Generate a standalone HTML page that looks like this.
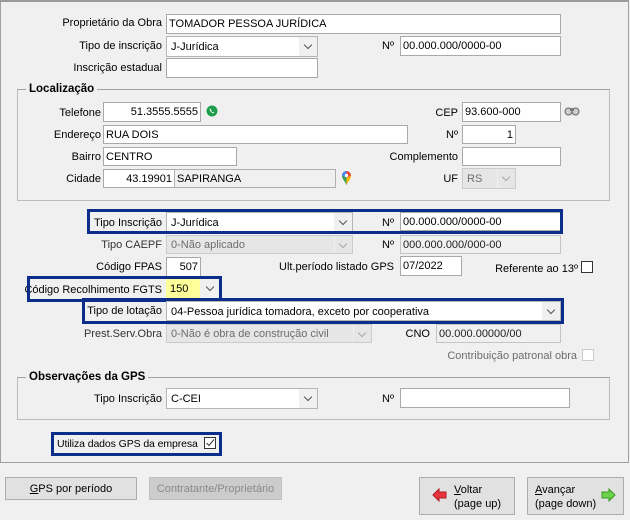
<!DOCTYPE html>
<html><head><meta charset="utf-8"><style>
*{box-sizing:border-box;margin:0;padding:0}
body{width:630px;height:520px;background:#f0f0f0;font-family:"Liberation Sans",sans-serif;font-size:11px;color:#000;position:relative;overflow:hidden}
.a{position:absolute}
.l{position:absolute;text-align:right;white-space:nowrap;line-height:14px}
.in{position:absolute;background:#fff;border:1px solid #a9a9a9;padding:2px 2px;line-height:14px;white-space:nowrap;overflow:hidden}
.dis{background:#f0f0f0;color:#6d6d6d;border-color:#cfcfcf}
.cb{position:absolute;background:#fff;border:1px solid #a9a9a9;overflow:hidden}
.cb span{position:absolute;left:4px;top:3px;line-height:14px;white-space:nowrap}
.cb i{position:absolute;right:0;top:0;bottom:0;width:18px;background:#f0f0f0;border-left:1px solid #f0f0f0}
.cb i:after{content:"";position:absolute;left:5px;top:5px;width:5px;height:5px;border-right:1px solid #555;border-bottom:1px solid #555;transform:rotate(45deg)}
.cb.d{background:#e6e6e6;border-color:#cccccc;color:#6d6d6d}
.cb.d i{background:#e6e6e6}
.cb.d i:after{border-color:#aaa}
.grp{position:absolute;border:1px solid #bcbcbc;border-top-color:#a0a0a0}
.gl{position:absolute;background:#f0f0f0;font-weight:bold;padding:0 3px;line-height:14px;font-size:11.5px}
.hl{position:absolute;border:3px solid #0c2e8a}
.chk{position:absolute;background:#fff;border:1px solid #333;width:12px;height:12px}
.btn{position:absolute;background:#e1e1e1;border:1px solid #adadad;text-align:center;line-height:14px}
</style></head><body>
<div class="a" style="left:0;top:0;width:629px;height:463px;border:1px solid #a0a0a0;border-top:2px solid #9a9a9a"></div>

<div class="l" style="right:468px;top:16px">Proprietário da Obra</div>
<div class="in" style="left:166px;top:14px;width:395px;height:20px">TOMADOR PESSOA JURÍDICA</div>
<div class="l" style="right:468px;top:39px">Tipo de inscrição</div>
<div class="cb" style="left:166px;top:36px;width:152px;height:21px;border-color:#b5b5b5;background:#fff"><span>J-Jurídica</span><i></i></div>
<div class="l" style="right:236px;top:39px">Nº</div>
<div class="in" style="left:400px;top:36px;width:161px;height:20px">00.000.000/0000-00</div>
<div class="l" style="right:468px;top:61px">Inscrição estadual</div>
<div class="in" style="left:166px;top:58px;width:152px;height:20px"></div>

<div class="grp" style="left:17px;top:89px;width:593px;height:112px"></div>
<div class="gl" style="left:26px;top:82px">Localização</div>
<div class="l" style="right:529px;top:106px">Telefone</div>
<div class="in" style="left:103px;top:102px;width:98px;height:20px;text-align:right">51.3555.5555</div>
<svg class="a" style="left:206px;top:105px" width="12" height="12" viewBox="0 0 12 12"><circle cx="6" cy="6" r="5.5" fill="#1e9e4a"/><path d="M4 3.5c-.5.5-.5 1.5.3 2.6s1.8 1.9 2.7 2.1c.6.1 1-.2 1.2-.6l-.9-.7-.6.4c-.6-.3-1.3-1-1.6-1.6l.4-.6-.7-.9z" fill="#fff"/></svg>
<div class="l" style="right:172px;top:106px">CEP</div>
<div class="in" style="left:462px;top:102px;width:99px;height:20px">93.600-000</div>
<svg class="a" style="left:564px;top:106px" width="16" height="10" viewBox="0 0 16 10"><circle cx="4.5" cy="5.5" r="3.5" fill="#ccc" stroke="#666"/><circle cx="11.5" cy="5.5" r="3.5" fill="#ccc" stroke="#666"/><rect x="6" y="2" width="4" height="3" fill="#777"/></svg>
<div class="l" style="right:529px;top:128px">Endereço</div>
<div class="in" style="left:103px;top:125px;width:305px;height:19px">RUA DOIS</div>
<div class="l" style="right:172px;top:128px">Nº</div>
<div class="in" style="left:462px;top:125px;width:54px;height:19px;text-align:right">1</div>
<div class="l" style="right:529px;top:150px">Bairro</div>
<div class="in" style="left:103px;top:147px;width:134px;height:19px">CENTRO</div>
<div class="l" style="right:172px;top:150px">Complemento</div>
<div class="in" style="left:462px;top:147px;width:99px;height:19px"></div>
<div class="l" style="right:529px;top:172px">Cidade</div>
<div class="in" style="left:103px;top:169px;width:72px;height:19px;text-align:right">43.19901</div>
<div class="in" style="left:174px;top:169px;width:162px;height:19px;background:#f0f0f0;border-color:#b0b0b0">SAPIRANGA</div>
<svg class="a" style="left:341px;top:170px" width="11" height="16" viewBox="0 0 11 16"><path d="M5.5 15C4 11 1 9 1 5.5a4.5 4.5 0 0 1 9 0C10 9 7 11 5.5 15z" fill="#ea4335"/><path d="M1 5.5a4.5 4.5 0 0 1 4.5-4.5V8z" fill="#4285f4"/><path d="M5.5 15C4 11 1 9 1 5.5L5.5 8z" fill="#34a853"/><path d="M10 5.5C10 9 7 11 5.5 15V8z" fill="#fbbc04"/><circle cx="5.5" cy="5.5" r="1.7" fill="#fff"/></svg>
<div class="l" style="right:172px;top:172px">UF</div>
<div class="cb d" style="left:462px;top:168px;width:54px;height:21px"><span>RS</span><i></i></div>

<div class="l" style="right:468px;top:216px">Tipo Inscrição</div>
<div class="cb" style="left:166px;top:212px;width:187px;height:20px;border-color:#b5b5b5"><span>J-Jurídica</span><i></i></div>
<div class="l" style="right:236px;top:216px">Nº</div>
<div class="in" style="left:400px;top:212px;width:161px;height:19px">00.000.000/0000-00</div>
<div class="hl" style="left:87px;top:209px;width:476px;height:25px"></div>

<div class="l" style="right:468px;top:238px;color:#333">Tipo CAEPF</div>
<div class="cb d" style="left:166px;top:235px;width:187px;height:19px"><span style="top:2px">0-Não aplicado</span><i></i></div>
<div class="l" style="right:236px;top:238px">Nº</div>
<div class="in dis" style="left:400px;top:235px;width:161px;height:19px;color:#222;border-color:#c4c4c4">000.000.000/000-00</div>

<div class="l" style="right:468px;top:260px">Código FPAS</div>
<div class="in" style="left:166px;top:257px;width:35px;height:20px;text-align:right">507</div>
<div class="l" style="right:236px;top:260px">Ult.período listado GPS</div>
<div class="in" style="left:400px;top:256px;width:62px;height:20px">07/2022</div>
<div class="l" style="right:52px;top:262px">Referente ao 13º</div>
<div class="chk" style="left:581px;top:261px"></div>

<div class="cb" style="left:166px;top:279px;width:53px;height:20px;border:none;background:#f0f0f0"><span style="left:0;top:0;width:34px;height:20px;background:#ffff9a;padding:3px 4px">150</span><i></i></div>
<div class="l" style="right:468px;top:283px">Código Recolhimento FGTS</div>
<div class="hl" style="left:27px;top:276px;width:195px;height:26px"></div>

<div class="cb" style="left:166px;top:301px;width:395px;height:20px;border-color:#b5b5b5"><span>04-Pessoa jurídica tomadora, exceto por cooperativa</span><i></i></div>
<div class="l" style="right:468px;top:304px">Tipo de lotação</div>
<div class="hl" style="left:82px;top:298px;width:482px;height:26px"></div>

<div class="l" style="right:468px;top:327px;color:#333">Prest.Serv.Obra</div>
<div class="cb d" style="left:166px;top:324px;width:206px;height:19px"><span style="top:2px">0-Não é obra de construção civil</span><i></i></div>
<div class="l" style="right:200px;top:327px">CNO</div>
<div class="in dis" style="left:436px;top:324px;width:125px;height:19px;color:#222;border-color:#c4c4c4">00.000.00000/00</div>
<div class="l" style="right:53px;top:349px;color:#6d6d6d">Contribuição patronal obra</div>
<div class="chk" style="left:582px;top:349px;border-color:#ccc"></div>

<div class="grp" style="left:17px;top:377px;width:593px;height:43px"></div>
<div class="gl" style="left:26px;top:370px">Observações da GPS</div>
<div class="l" style="right:468px;top:392px">Tipo Inscrição</div>
<div class="cb" style="left:166px;top:388px;width:152px;height:21px;border-color:#b5b5b5"><span>C-CEI</span><i></i></div>
<div class="l" style="right:236px;top:392px">Nº</div>
<div class="in" style="left:400px;top:388px;width:170px;height:20px"></div>

<div class="hl" style="left:51px;top:432px;width:171px;height:24px"></div>
<div class="l" style="left:57px;top:437px;text-align:left;font-size:10.5px;letter-spacing:-0.1px">Utiliza dados GPS da empresa</div>
<div class="chk" style="left:204px;top:437px"><svg width="10" height="10" viewBox="0 0 10 10" style="position:absolute;left:0;top:0"><path d="M1.5 5l2.5 2.5 5-6" fill="none" stroke="#333" stroke-width="1"/></svg></div>

<div class="btn" style="left:5px;top:477px;width:132px;height:23px;padding-top:4px"><u>G</u>PS por período</div>
<div class="btn" style="left:149px;top:477px;width:133px;height:23px;padding-top:4px;color:#8a8a8a;background:#cccccc;border-color:#bfbfbf">Contratante/Proprietário</div>
<div class="btn" style="left:419px;top:477px;width:96px;height:38px;text-align:left;padding:5px 0 0 34px"><u>V</u>oltar<br>(page up)</div>
<svg class="a" style="left:432px;top:488px" width="15" height="14" viewBox="0 0 15 14"><path d="M1 7L7 1v3h7v6H7v3z" fill="#e8343c" stroke="#b01a20"/></svg>
<div class="btn" style="left:527px;top:477px;width:97px;height:38px;text-align:left;padding:5px 0 0 7px"><u>A</u>vançar<br>(page down)</div>
<svg class="a" style="left:601px;top:488px" width="15" height="14" viewBox="0 0 15 14"><path d="M14 7L8 1v3H1v6h7v3z" fill="#6cd24a" stroke="#3a9a22"/></svg>
</body></html>
